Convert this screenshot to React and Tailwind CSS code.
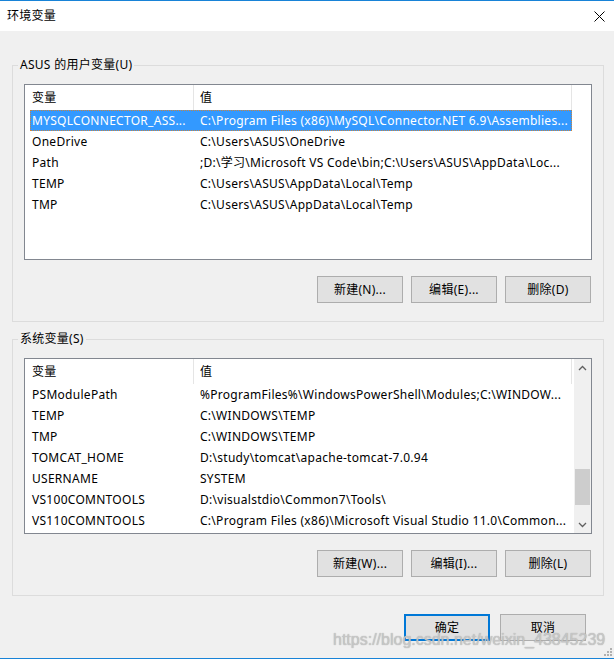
import React from 'react';

const userVars = [
  ['MYSQLCONNECTOR_ASS...', 'C:\\Program Files (x86)\\MySQL\\Connector.NET 6.9\\Assemblies...'],
  ['OneDrive', 'C:\\Users\\ASUS\\OneDrive'],
  ['Path', ';D:\\学习\\Microsoft VS Code\\bin;C:\\Users\\ASUS\\AppData\\Loc...'],
  ['TEMP', 'C:\\Users\\ASUS\\AppData\\Local\\Temp'],
  ['TMP', 'C:\\Users\\ASUS\\AppData\\Local\\Temp'],
];

const sysVars = [
  ['PSModulePath', '%ProgramFiles%\\WindowsPowerShell\\Modules;C:\\WINDOW...'],
  ['TEMP', 'C:\\WINDOWS\\TEMP'],
  ['TMP', 'C:\\WINDOWS\\TEMP'],
  ['TOMCAT_HOME', 'D:\\study\\tomcat\\apache-tomcat-7.0.94'],
  ['USERNAME', 'SYSTEM'],
  ['VS100COMNTOOLS', 'D:\\visualstdio\\Common7\\Tools\\'],
  ['VS110COMNTOOLS', 'C:\\Program Files (x86)\\Microsoft Visual Studio 11.0\\Common...'],
];

const Chevron = ({ down }) => (
  <svg width="9" height="6" viewBox="0 0 9 6" className="text-[#606060]">
    <path d={down ? 'M1 1 L4.5 4.5 L8 1' : 'M1 5 L4.5 1.5 L8 5'} fill="none" stroke="currentColor" strokeWidth="1.3" />
  </svg>
);

const Scrollbar = () => (
  <div className="w-[17px] ml-[1px] bg-[#f0f0f0] flex flex-col shrink-0">
    <div className="h-[17px] flex items-center justify-center"><Chevron /></div>
    <div className="flex-1">
      <div className="mt-[93px] h-[36px] mx-[1px] bg-[#cdcdcd]"></div>
    </div>
    <div className="h-[17px] flex items-center justify-center"><Chevron down /></div>
  </div>
);

const ListView = ({ rows, selected, scroll }) => (
  <div className="mx-[11px] mt-[11px] h-[176px] border border-[#828790] bg-white flex overflow-hidden">
    <div className="flex-1 min-w-0 flex flex-col">
      <div className="h-[25px] flex shrink-0">
        <div className="w-[169px] pl-[7px] flex items-center border-r border-[#e5e5e5]">变量</div>
        <div className="w-[378px] pl-[6px] flex items-center border-r border-[#e5e5e5]">值</div>
      </div>
      {rows.map(([name, value], i) => (
        <div
          key={name + i}
          className={
            i === selected
              ? 'ml-[5px] w-[542px] h-[21px] flex items-center bg-[#3399ff] text-white outline-1 outline-dotted outline-[#c9843f] -outline-offset-1'
              : 'ml-[5px] w-[542px] h-[21px] flex items-center'
          }
        >
          <div className="w-[164px] pl-[2px] whitespace-nowrap overflow-hidden">{name}</div>
          <div className="flex-1 pl-[6px] whitespace-nowrap overflow-hidden">{value}</div>
        </div>
      ))}
    </div>
    {scroll && <Scrollbar />}
  </div>
);

const Btn = ({ children, primary }) => (
  <div
    className={
      primary
        ? 'w-[86px] h-[27px] border-2 border-[#0078d7] bg-[#e1e1e1] flex items-center justify-center'
        : 'w-[86px] h-[27px] border border-[#adadad] bg-[#e1e1e1] flex items-center justify-center'
    }
  >
    {children}
  </div>
);

const Group = ({ title, className, children }) => (
  <fieldset className={'ml-[12px] w-[592px] border border-[#dcdcdc] pb-[18px] ' + className}>
    <legend className="ml-[5px] px-[2px] leading-[16px]">{title}</legend>
    {children}
  </fieldset>
);

export default function App() {
  return (
    <div className="relative w-[614px] h-[659px] bg-[#f0f0f0] border-t border-b border-[#1883d7] flex flex-col text-[12px] tracking-[0.28px] text-black font-['Noto_Sans','Noto_Sans_CJK_SC',sans-serif] overflow-hidden">
      <div className="h-[30px] bg-white flex items-center justify-between pl-[7px] pr-[9px] shrink-0">
        <span>环境变量</span>
        <svg width="11" height="11" viewBox="0 0 11 11">
          <path d="M0.5 0.5 L10.5 10.5 M10.5 0.5 L0.5 10.5" stroke="#000" strokeWidth="1" />
        </svg>
      </div>

      <Group title="ASUS 的用户变量(U)" className="mt-[26px]">
        <ListView rows={userVars} selected={0} />
        <div className="mt-[16px] pr-[12px] flex justify-end gap-[8px]">
          <Btn>新建(N)...</Btn>
          <Btn>编辑(E)...</Btn>
          <Btn>删除(D)</Btn>
        </div>
      </Group>

      <Group title="系统变量(S)" className="mt-[9px]">
        <ListView rows={sysVars} selected={-1} scroll />
        <div className="mt-[16px] pr-[12px] flex justify-end gap-[8px]">
          <Btn>新建(W)...</Btn>
          <Btn>编辑(I)...</Btn>
          <Btn>删除(L)</Btn>
        </div>
      </Group>

      <div className="mt-[18px] pr-[28px] flex justify-end gap-[10px]">
        <Btn primary>确定</Btn>
        <Btn>取消</Btn>
      </div>

      <div className="absolute left-[333px] top-[631px] text-[16px] leading-[16px] tracking-normal font-['Liberation_Sans',sans-serif] text-[#cfcfcf]/80 [text-shadow:0_0_1px_#9a9a9a] whitespace-nowrap pointer-events-none">
        https://blog.csdn.net/weixin_43845239
      </div>
      <svg className="absolute right-[2px] bottom-[2px]" width="10" height="10" viewBox="0 0 10 10">
        <rect x="8" y="2" width="2" height="2" fill="#b0b0b0" />
        <rect x="5" y="5" width="2" height="2" fill="#b0b0b0" />
        <rect x="8" y="5" width="2" height="2" fill="#b0b0b0" />
        <rect x="2" y="8" width="2" height="2" fill="#b0b0b0" />
        <rect x="5" y="8" width="2" height="2" fill="#b0b0b0" />
        <rect x="8" y="8" width="2" height="2" fill="#b0b0b0" />
      </svg>
    </div>
  );
}
